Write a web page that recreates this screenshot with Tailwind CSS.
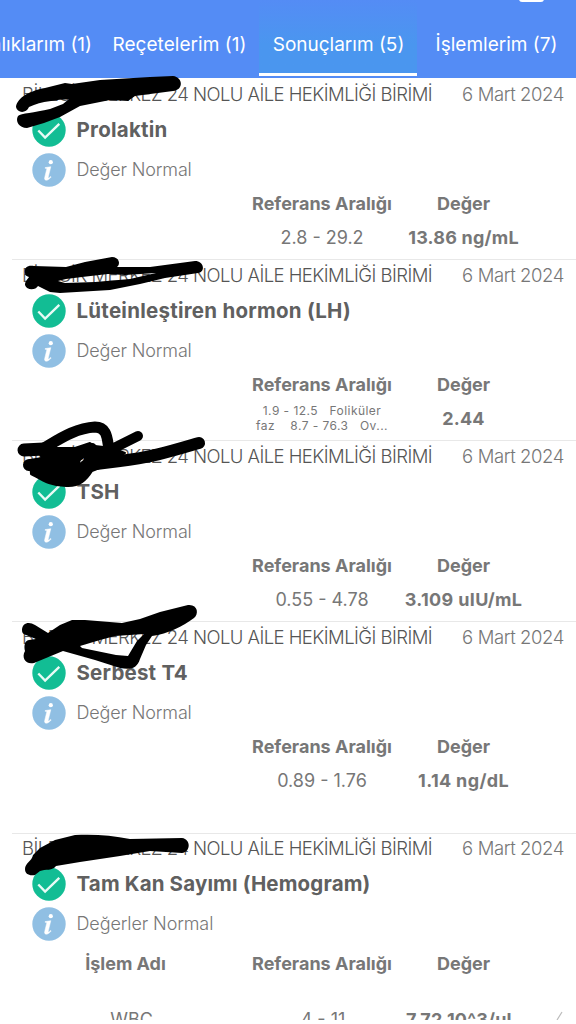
<!DOCTYPE html>
<html lang="tr">
<head>
  <meta charset="UTF-8" />
  <meta name="viewport" content="width=device-width, initial-scale=1.0"/>
  <title>Sonuçlarım</title>
  <script src="https://cdn.jsdelivr.net/npm/@tailwindcss/browser@4"></script>
</head>
<body class="bg-white font-['Inter','Liberation_Sans',sans-serif] w-[576px] h-[1024px] overflow-hidden">
  <svg class="hidden">
    <symbol id="check" viewBox="0 0 34 34">
      <circle cx="17" cy="17" r="16.7" fill="#12bd94"/>
      <path d="M6.3 17.5l6.8 7L27.3 10.8" fill="none" stroke="#e9fbf6" stroke-width="2.4"/>
    </symbol>
    <symbol id="info" viewBox="0 0 34 34">
      <circle cx="17" cy="17" r="16.7" fill="#90bfe3"/>
      <circle cx="18.8" cy="9.2" r="2.1" fill="#fff"/>
      <path d="M13.2 14.6l5.6-.9-2.6 10.6c-.2 1 .6.9 2.4-.9l.6.6c-2.2 2.6-3.6 3.2-4.8 3.2-1.6 0-2.1-1.1-1.7-2.7l2-8.2c.2-.8-.3-1-1.6-1z" fill="#fff" stroke="#fff" stroke-width=".5"/>
    </symbol>
  </svg>

  <header class="relative h-[78px] bg-[#548cf5] flex items-stretch text-white text-[19px] whitespace-nowrap overflow-hidden">
    <div class="absolute left-[519px] -top-2 w-[25px] h-[10px] rounded-[3px] bg-white"></div>
    <a class="w-[100px] pr-2 flex justify-end items-center pt-3">Hastalıklarım (1)</a>
    <a class="w-[159px] flex justify-center items-center pt-3 tracking-[0.05px]">Reçetelerim (1)</a>
    <a class="w-[158px] mb-[2px] flex justify-center items-center pt-[17px] pl-px border-b-3 border-white bg-linear-to-b from-[#548cf5] to-[#4a96ef] to-60%">Sonuçlarım (5)</a>
    <a class="w-[159px] flex justify-center items-center pt-3">İşlemlerim (7)</a>
  </header>

  <main class="text-[#777] whitespace-nowrap h-[942px] overflow-hidden">
    <section class="h-[181px]">
      <div class="ml-3 h-8 pt-px pl-[10px] pr-3 flex items-center justify-between font-light text-[18.5px]">
        <span class="text-[#555] tracking-[-0.55px]">BİLECİK MERKEZ 24 NOLU AİLE HEKİMLİĞİ BİRİMİ</span><span class="tracking-[-0.4px]">6 Mart 2024</span>
      </div>
      <div class="h-[39px] pt-px pl-[31.5px] flex items-center gap-[11px]">
        <svg class="size-[34px]"><use href="#check"/></svg>
        <h2 class="text-[20.5px] font-bold text-[#606060] tracking-[0.25px]">Prolaktin</h2>
      </div>
      <div class="h-[41px] pl-[31.5px] flex items-center gap-[11px] font-light text-[18px] tracking-[-0.15px]">
        <svg class="size-[34px]"><use href="#info"/></svg><span>Değer Normal</span>
      </div>
      <div class="h-[25px] pl-[251px] grid grid-cols-[142px_141px] items-center text-center font-bold text-[18px]">
        <span>Referans Aralığı</span><span>Değer</span>
      </div>
      <div class="h-[44px] pl-[251px] grid grid-cols-[142px_141px] items-center text-center text-[18px]">
        <span>2.8 - 29.2</span><b class="tracking-[0.2px]">13.86 ng/mL</b>
      </div>
    </section>

    <section class="h-[181px]">
      <div class="ml-3 h-8 pt-px pl-[10px] pr-3 flex items-center justify-between font-light text-[18.5px] border-t border-[#e8e8e8]">
        <span class="text-[#555] tracking-[-0.55px]">BİLECİK MERKEZ 24 NOLU AİLE HEKİMLİĞİ BİRİMİ</span><span class="tracking-[-0.4px]">6 Mart 2024</span>
      </div>
      <div class="h-[39px] pt-px pl-[31.5px] flex items-center gap-[11px]">
        <svg class="size-[34px]"><use href="#check"/></svg>
        <h2 class="text-[20.5px] font-bold text-[#606060] tracking-[0.25px]">Lüteinleştiren hormon (LH)</h2>
      </div>
      <div class="h-[41px] pl-[31.5px] flex items-center gap-[11px] font-light text-[18px] tracking-[-0.15px]">
        <svg class="size-[34px]"><use href="#info"/></svg><span>Değer Normal</span>
      </div>
      <div class="h-[25px] pl-[251px] grid grid-cols-[142px_141px] items-center text-center font-bold text-[18px]">
        <span>Referans Aralığı</span><span>Değer</span>
      </div>
      <div class="h-[44px] pl-[251px] grid grid-cols-[142px_141px] items-center text-center text-[18px]">
        <span class="pt-px text-[12px] tracking-[0.45px] leading-[14.5px] whitespace-pre">1.9 - 12.5   Foliküler<br>faz    8.7 - 76.3   Ov...</span><b class="tracking-[0.2px]">2.44</b>
      </div>
    </section>

    <section class="h-[181px]">
      <div class="ml-3 h-8 pt-px pl-[10px] pr-3 flex items-center justify-between font-light text-[18.5px] border-t border-[#e8e8e8]">
        <span class="text-[#555] tracking-[-0.55px]">BİLECİK MERKEZ 24 NOLU AİLE HEKİMLİĞİ BİRİMİ</span><span class="tracking-[-0.4px]">6 Mart 2024</span>
      </div>
      <div class="h-[39px] pt-px pl-[31.5px] flex items-center gap-[11px]">
        <svg class="size-[34px]"><use href="#check"/></svg>
        <h2 class="text-[20.5px] font-bold text-[#606060] tracking-[0.25px]">TSH</h2>
      </div>
      <div class="h-[41px] pl-[31.5px] flex items-center gap-[11px] font-light text-[18px] tracking-[-0.15px]">
        <svg class="size-[34px]"><use href="#info"/></svg><span>Değer Normal</span>
      </div>
      <div class="h-[25px] pl-[251px] grid grid-cols-[142px_141px] items-center text-center font-bold text-[18px]">
        <span>Referans Aralığı</span><span>Değer</span>
      </div>
      <div class="h-[44px] pl-[251px] grid grid-cols-[142px_141px] items-center text-center text-[18px]">
        <span>0.55 - 4.78</span><b class="tracking-[0.35px]">3.109 uIU/mL</b>
      </div>
    </section>

    <section class="h-[212px]">
      <div class="ml-3 h-8 pt-px pl-[10px] pr-3 flex items-center justify-between font-light text-[18.5px] border-t border-[#e8e8e8]">
        <span class="text-[#555] tracking-[-0.55px]">BİLECİK MERKEZ 24 NOLU AİLE HEKİMLİĞİ BİRİMİ</span><span class="tracking-[-0.4px]">6 Mart 2024</span>
      </div>
      <div class="h-[39px] pt-px pl-[31.5px] flex items-center gap-[11px]">
        <svg class="size-[34px]"><use href="#check"/></svg>
        <h2 class="text-[20.5px] font-bold text-[#606060] tracking-[0.2px]">Serbest T4</h2>
      </div>
      <div class="h-[41px] pl-[31.5px] flex items-center gap-[11px] font-light text-[18px] tracking-[-0.15px]">
        <svg class="size-[34px]"><use href="#info"/></svg><span>Değer Normal</span>
      </div>
      <div class="h-[25px] pl-[251px] grid grid-cols-[142px_141px] items-center text-center font-bold text-[18px]">
        <span>Referans Aralığı</span><span>Değer</span>
      </div>
      <div class="h-[44px] pl-[251px] grid grid-cols-[142px_141px] items-center text-center text-[18px]">
        <span>0.89 - 1.76</span><b class="tracking-[0.35px]">1.14 ng/dL</b>
      </div>
    </section>

    <section>
      <div class="ml-3 h-8 pb-px pl-[10px] pr-3 flex items-center justify-between font-light text-[18.5px] border-t border-[#e8e8e8]">
        <span class="text-[#555] tracking-[-0.55px]">BİLECİK MERKEZ 24 NOLU AİLE HEKİMLİĞİ BİRİMİ</span><span class="tracking-[-0.4px]">6 Mart 2024</span>
      </div>
      <div class="h-[38px] pl-[31.5px] flex items-center gap-[11px]">
        <svg class="size-[34px]"><use href="#check"/></svg>
        <h2 class="text-[20.5px] font-bold text-[#606060] tracking-[0.15px]">Tam Kan Sayımı (Hemogram)</h2>
      </div>
      <div class="h-[41px] pl-[31.5px] flex items-center gap-[11px] font-light text-[18px] tracking-[-0.1px]">
        <svg class="size-[34px]"><use href="#info"/></svg><span>Değerler Normal</span>
      </div>
      <div class="h-[39px] grid grid-cols-[251px_142px_141px] items-center text-center font-bold text-[18px]">
        <span>İşlem Adı</span><span>Referans Aralığı</span><span>Değer</span>
      </div>
      <div class="h-[72px] grid grid-cols-[263px_120px_157px_36px] items-center text-center text-[18px]">
        <span>WBC</span><span>4 - 11</span><b class="tracking-[0.2px]">7.72 10^3/uL</b>
        <svg class="w-9 h-5" viewBox="0 0 36 20"><path d="M17 11l5-8" stroke="#bbb" stroke-width="1.2"/></svg>
      </div>
    </section>
  </main>

  <!-- marker strokes over the clinic names -->
  <svg class="absolute left-0 top-0 w-[576px] h-[1024px]" viewBox="0 0 576 1024" stroke-linecap="round" stroke-linejoin="round">
    <path d="M16 107C17 98 29 91 45 88L65 83L72 84L100 80L150 77L173 76C183 77 184 90 173 91L135 96L128 101L110 100L80 106L60 117L44 123L27 128C19 128 15 121 18 116C21 113 34 113 50 109L63 104L69 99C57 100 42 101 29 107C26 114 17 113 16 107Z"/>
    <path fill-rule="evenodd" d="M25 273C24 267 28 265 34 266L66 267L85 262L112 257C119 257 121 264 117 267L150 267L195 261C204 261 206 272 198 273L165 278L140 284L110 290L60 293L50 292L38 286C36 290 27 291 25 285C25 281 28 279 29 277C26 276 25 275 25 273ZM58 281L65 283L95 282L130 279L156 273L125 275L108 274L82 277L66 279Z"/>
    <g fill="none" stroke="#000">
      <path stroke-width="13" d="M24 450L44 449"/>
      <path stroke-width="11" d="M44 448C58 440 75 428 95 427C108 427 107 440 109 449"/>
      <path stroke-width="10" d="M105 453L116 447L138 436M92 448L88 452"/>
      <path stroke-width="12" d="M29 465L45 466M88 465L120 461C150 458 175 450 199 443"/>
      <path fill="#000" stroke-width="2" fill-rule="evenodd" d="M40 454L52 448L75 448L90 443L95 446L112 448L125 453L112 463L92 471C87 479 80 487 66 486C50 486 42 480 31 474L30 460L42 458ZM77 466L85 460L85 456L80 460Z"/>
    </g>
    <path fill-rule="evenodd" d="M22 630C22 623 29 621 35 625L48 633L60 625L72 620L85 620L122 623L140 619L160 612L188 605C198 604 199 614 194 618C183 626 168 634 152 636L146 645L140 659C137 668 132 670 120 668L95 660L63 651L34 663C26 665 21 658 25 651C24 647 24 641 29 640L36 639L26 635C23 634 22 633 22 630ZM80 646L100 640L115 636L144 634L137 641L128 656L116 655L82 648Z"/>
    <path d="M25 869C25 863 32 861 33 855L40 848L55 840L75 835C92 834 112 835 130 839L182 838C191 839 191 852 182 853L150 851L120 856L80 862L56 866C53 871 45 869 40 871L35 875C29 876 25 874 25 869Z"/>
  </svg>
</body>
</html>
